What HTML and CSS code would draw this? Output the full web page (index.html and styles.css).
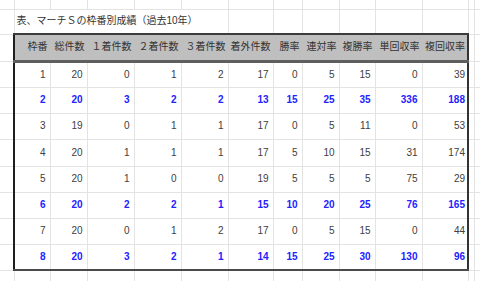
FILE: index.html
```html
<!DOCTYPE html>
<html lang="ja">
<head>
<meta charset="utf-8">
<link rel="stylesheet" href="styles.css">
</head>
<body>
<table class="sheet">
<colgroup>
<col class="c14"><col class="c36"><col class="c37"><col class="c47"><col class="c47"><col class="c47"><col class="c45"><col class="c29"><col class="c37"><col class="c36"><col class="c47"><col class="c46"><col class="c6"><col class="c6">
</colgroup>
<tr class="r0"><td></td><td></td><td></td><td></td><td></td><td></td><td></td><td></td><td></td><td></td><td></td><td></td><td></td><td></td></tr>
<tr class="r1"><td></td><td class="title" colspan="5">表、マーチＳの枠番別成績（過去10年）</td><td class="tt"></td><td class="tt"></td><td class="tt"></td><td class="tt"></td><td class="tt"></td><td class="tt"></td><td></td><td></td></tr>
<tr class="rh"><td></td><td class="h first">枠番</td><td class="h">総件数</td><td class="h">１着件数</td><td class="h">２着件数</td><td class="h">３着件数</td><td class="h">着外件数</td><td class="h">勝率</td><td class="h">連対率</td><td class="h">複勝率</td><td class="h">単回収率</td><td class="h last">複回収率</td><td></td><td></td></tr>
<tr class="rd"><td></td><td class="first">1</td><td>20</td><td>0</td><td>1</td><td>2</td><td>17</td><td>0</td><td>5</td><td>15</td><td>0</td><td class="last">39</td><td></td><td></td></tr>
<tr class="rd hi"><td></td><td class="first">2</td><td>20</td><td>3</td><td>2</td><td>2</td><td>13</td><td>15</td><td>25</td><td>35</td><td>336</td><td class="last">188</td><td></td><td></td></tr>
<tr class="rd"><td></td><td class="first">3</td><td>19</td><td>0</td><td>1</td><td>1</td><td>17</td><td>0</td><td>5</td><td>11</td><td>0</td><td class="last">53</td><td></td><td></td></tr>
<tr class="rd r27"><td></td><td class="first">4</td><td>20</td><td>1</td><td>1</td><td>1</td><td>17</td><td>5</td><td>10</td><td>15</td><td>31</td><td class="last">174</td><td></td><td></td></tr>
<tr class="rd"><td></td><td class="first">5</td><td>20</td><td>1</td><td>0</td><td>0</td><td>19</td><td>5</td><td>5</td><td>5</td><td>75</td><td class="last">29</td><td></td><td></td></tr>
<tr class="rd hi"><td></td><td class="first">6</td><td>20</td><td>2</td><td>2</td><td>1</td><td>15</td><td>10</td><td>20</td><td>25</td><td>76</td><td class="last">165</td><td></td><td></td></tr>
<tr class="rd"><td></td><td class="first">7</td><td>20</td><td>0</td><td>1</td><td>2</td><td>17</td><td>0</td><td>5</td><td>15</td><td>0</td><td class="last">44</td><td></td><td></td></tr>
<tr class="rd hi end"><td></td><td class="first">8</td><td>20</td><td>3</td><td>2</td><td>1</td><td>14</td><td>15</td><td>25</td><td>30</td><td>130</td><td class="last">96</td><td></td><td></td></tr>
<tr class="rb"><td></td><td></td><td></td><td></td><td></td><td></td><td></td><td></td><td></td><td></td><td></td><td></td><td></td><td></td></tr>
</table>
</body>
</html>
```
FILE: styles.css
```css
html, body {
  margin: 0;
  padding: 0;
  background: #ffffff;
  overflow: hidden;
}

.sheet {
  border-collapse: collapse;
  border-style: hidden;
  table-layout: fixed;
  width: 480px;
  font-family: "Liberation Sans", "Noto Sans CJK JP", sans-serif;
  font-size: 10px;
  color: #404040;
}

.c14 { width: 14px; }
.c36 { width: 36px; }
.c37 { width: 37px; }
.c47 { width: 47px; }
.c45 { width: 45px; }
.c29 { width: 29px; }
.c46 { width: 46px; }
.c6 { width: 6px; }

.sheet td {
  border: 1px solid #e3e3e3;
  padding: 0 4px 0 0;
  text-align: right;
  white-space: nowrap;
  overflow: visible;
  line-height: 12px;
}

.r0 { height: 9px; }
.r1 { height: 25px; }
.rh { height: 27px; }
.rd { height: 26px; }
.r27 { height: 27px; }
.rb { height: 12px; }

.sheet .title {
  text-align: left;
  padding: 0 0 0 2px;
  font-size: 10px;
  color: #333333;
  border-bottom: 2px solid #3c3c3c;
}

.sheet .tt {
  border-bottom: 2px solid #3c3c3c;
}

.sheet .h {
  background: #bfbfbf;
  color: #333333;
  padding-right: 2px;
  border-left: 1px solid #bfbfbf;
  border-right: 1px solid #bfbfbf;
  border-top: 2px solid #3c3c3c;
  border-bottom: 3px solid #5e5e5e;
}

.sheet .first {
  border-left: 2px solid #1e1e1e;
}

.sheet .last {
  border-right: 2px solid #333333;
  padding-right: 2px;
}

.hi td {
  color: #2222ff;
  font-weight: bold;
}

.end td:not(:first-child):not(:nth-last-child(-n+2)) {
  border-bottom: 2px solid #4a4a4a;
}
```
